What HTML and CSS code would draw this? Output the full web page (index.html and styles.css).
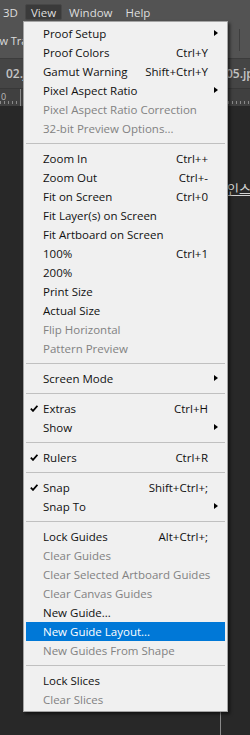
FILE: index.html
```html
<!DOCTYPE html>
<html>
<head>
<meta charset="utf-8">
<link rel="stylesheet" href="styles.css">
</head>
<body>
<div class="app">
  <div class="menubar">
    <span class="mb-item">3D</span>
    <span class="mb-item active">View</span>
    <span class="mb-item">Window</span>
    <span class="mb-item">Help</span>
  </div>
  <div class="optionsbar">
    <span class="opt-text">Show Transform Controls</span>
    <span class="opt-sep"></span>
  </div>
  <div class="tabs">
    <div class="tab tab-first">02.jpg @ 66.7% (RGB/8)</div>
    <div class="tab">05.jpg @ 100%</div>
  </div>
  <div class="ruler"><span class="ruler-num">0</span><span class="ruler-major"></span></div>
  <div class="canvas">
    <span class="canvas-text">인스타그램</span>
    <span class="canvas-edge"></span>
  </div>
</div>

<ul class="menu">
  <li class="mi sub"><span class="lbl">Proof Setup</span></li>
  <li class="mi"><span class="lbl">Proof Colors</span><span class="sc">Ctrl+Y</span></li>
  <li class="mi"><span class="lbl">Gamut Warning</span><span class="sc">Shift+Ctrl+Y</span></li>
  <li class="mi sub"><span class="lbl">Pixel Aspect Ratio</span></li>
  <li class="mi dis"><span class="lbl">Pixel Aspect Ratio Correction</span></li>
  <li class="mi dis"><span class="lbl">32-bit Preview Options...</span></li>
  <li class="sep"></li>
  <li class="mi"><span class="lbl">Zoom In</span><span class="sc">Ctrl++</span></li>
  <li class="mi"><span class="lbl">Zoom Out</span><span class="sc">Ctrl+-</span></li>
  <li class="mi"><span class="lbl">Fit on Screen</span><span class="sc">Ctrl+0</span></li>
  <li class="mi"><span class="lbl">Fit Layer(s) on Screen</span></li>
  <li class="mi"><span class="lbl">Fit Artboard on Screen</span></li>
  <li class="mi"><span class="lbl">100%</span><span class="sc">Ctrl+1</span></li>
  <li class="mi"><span class="lbl">200%</span></li>
  <li class="mi"><span class="lbl">Print Size</span></li>
  <li class="mi"><span class="lbl">Actual Size</span></li>
  <li class="mi dis"><span class="lbl">Flip Horizontal</span></li>
  <li class="mi dis"><span class="lbl">Pattern Preview</span></li>
  <li class="sep"></li>
  <li class="mi sub"><span class="lbl">Screen Mode</span></li>
  <li class="sep"></li>
  <li class="mi chk"><span class="lbl">Extras</span><span class="sc">Ctrl+H</span></li>
  <li class="mi sub"><span class="lbl">Show</span></li>
  <li class="sep"></li>
  <li class="mi chk"><span class="lbl">Rulers</span><span class="sc">Ctrl+R</span></li>
  <li class="sep"></li>
  <li class="mi chk"><span class="lbl">Snap</span><span class="sc">Shift+Ctrl+;</span></li>
  <li class="mi sub"><span class="lbl">Snap To</span></li>
  <li class="sep"></li>
  <li class="mi"><span class="lbl">Lock Guides</span><span class="sc">Alt+Ctrl+;</span></li>
  <li class="mi dis"><span class="lbl">Clear Guides</span></li>
  <li class="mi dis"><span class="lbl">Clear Selected Artboard Guides</span></li>
  <li class="mi dis"><span class="lbl">Clear Canvas Guides</span></li>
  <li class="mi"><span class="lbl">New Guide...</span></li>
  <li class="mi hl"><span class="lbl">New Guide Layout...</span></li>
  <li class="mi dis"><span class="lbl">New Guides From Shape</span></li>
  <li class="sep"></li>
  <li class="mi"><span class="lbl">Lock Slices</span></li>
  <li class="mi dis"><span class="lbl">Clear Slices</span></li>
</ul>
</body>
</html>
```
FILE: styles.css
```css
html, body {
  margin: 0;
  padding: 0;
}
body {
  width: 250px;
  height: 735px;
  overflow: hidden;
  background: #282828;
  font-family: "Open Sans", "Noto Sans", sans-serif;
  position: relative;
}
.app {
  display: flex;
  flex-direction: column;
  height: 735px;
  overflow: hidden;
}
.menubar {
  height: 22px;
  flex: none;
  box-sizing: border-box;
  padding-top: 4px;
  background: #535353;
  display: flex;
  align-items: flex-start;
  gap: 1px;
  color: #dedede;
  font-size: 11.5px;
}
.mb-item {
  height: 16px;
  box-sizing: border-box;
  padding: 0 5px;
  border: 1px solid transparent;
  display: flex;
  align-items: center;
  white-space: nowrap;
}
.mb-item:first-child {
  margin-left: -3px;
}
.mb-item.active {
  background: #3a3a3a;
  border-color: #474747;
  border-radius: 2px;
}
.optionsbar {
  height: 36px;
  flex: none;
  background: #535353;
  border-bottom: 1px solid #3c3c3c;
  display: flex;
  align-items: center;
  color: #dcdcdc;
  font-size: 11px;
  overflow: hidden;
  white-space: nowrap;
}
.opt-text {
  margin-left: -20px;
}
.opt-sep {
  margin-left: auto;
  margin-right: 10px;
  width: 1px;
  height: 22px;
  background: #3e3e3e;
}
.tabs {
  height: 29px;
  flex: none;
  background: #454545;
  display: flex;
  overflow: hidden;
  white-space: nowrap;
  color: #c4c4c4;
  font-size: 12px;
  font-weight: 600;
}
.tab {
  display: flex;
  align-items: center;
  padding-left: 6px;
  box-sizing: border-box;
}
.tab-first {
  width: 220px;
  flex: none;
  overflow: hidden;
}
.ruler {
  height: 17px;
  flex: none;
  position: relative;
  background-color: #404040;
  background-image: repeating-linear-gradient(to right, #8a8a8a 0 1px, transparent 1px 4px);
  background-size: 100% 3px;
  background-position: 0 12px;
  background-repeat: no-repeat;
  color: #bdbdbd;
  font-size: 9px;
  border-top: 1px solid #383838;
}
.ruler-num {
  position: absolute;
  left: 1px;
  top: 1px;
}
.ruler-major {
  position: absolute;
  left: 20px;
  top: 0;
  width: 1px;
  height: 17px;
  background: #8a8a8a;
}
.canvas {
  flex: 1;
  position: relative;
  background: #282828;
}
.canvas-text {
  position: absolute;
  left: 227px;
  top: 73px;
  font-family: "Noto Sans CJK KR", sans-serif;
  font-size: 13px;
  color: #d2d2d2;
  text-decoration: underline;
  white-space: nowrap;
}
.canvas-edge {
  position: absolute;
  left: 220px;
  top: 0;
  bottom: 0;
  width: 1px;
  background: #8a8a8a;
}
.menu {
  position: absolute;
  left: 23px;
  top: 21px;
  width: 199px;
  margin: 0;
  padding: 2px;
  list-style: none;
  background: #f0f0f0;
  border: 1px solid #a4a4a4;
  box-shadow: 2px 2px 3px rgba(0, 0, 0, 0.55);
  font-size: 11.5px;
  color: #111;
}
.mi {
  height: 19px;
  line-height: 19px;
  display: grid;
  grid-template-columns: 17px 1fr auto 17px;
  white-space: nowrap;
  position: relative;
}
.mi .lbl {
  grid-column: 2;
}
.mi .sc {
  grid-column: 3;
  text-align: right;
}
.mi.dis {
  color: #828282;
}
.mi.hl {
  background: #0078d7;
  color: #fff;
}
.mi.sub::after {
  content: "";
  grid-column: 4;
  grid-row: 1;
  align-self: center;
  justify-self: start;
  margin-left: 6px;
  margin-top: -1px;
  width: 0;
  height: 0;
  border-top: 3.5px solid transparent;
  border-bottom: 3.5px solid transparent;
  border-left: 4px solid #000;
}
.mi.chk::before {
  content: "";
  grid-column: 1;
  grid-row: 1;
  align-self: center;
  justify-self: start;
  margin-left: 4px;
  margin-top: -1px;
  width: 8px;
  height: 7px;
  background: url("data:image/svg+xml;utf8,<svg xmlns='http://www.w3.org/2000/svg' width='8' height='7' viewBox='0 0 8 7'><path d='M0.8 3.6 L3 5.9 L7.4 0.8' fill='none' stroke='black' stroke-width='1.7'/></svg>") no-repeat;
}
.sep {
  height: 11px;
  display: flex;
  align-items: center;
}
.sep::before {
  content: "";
  flex: 1;
  height: 1px;
  background: #c0c0c0;
}
```
